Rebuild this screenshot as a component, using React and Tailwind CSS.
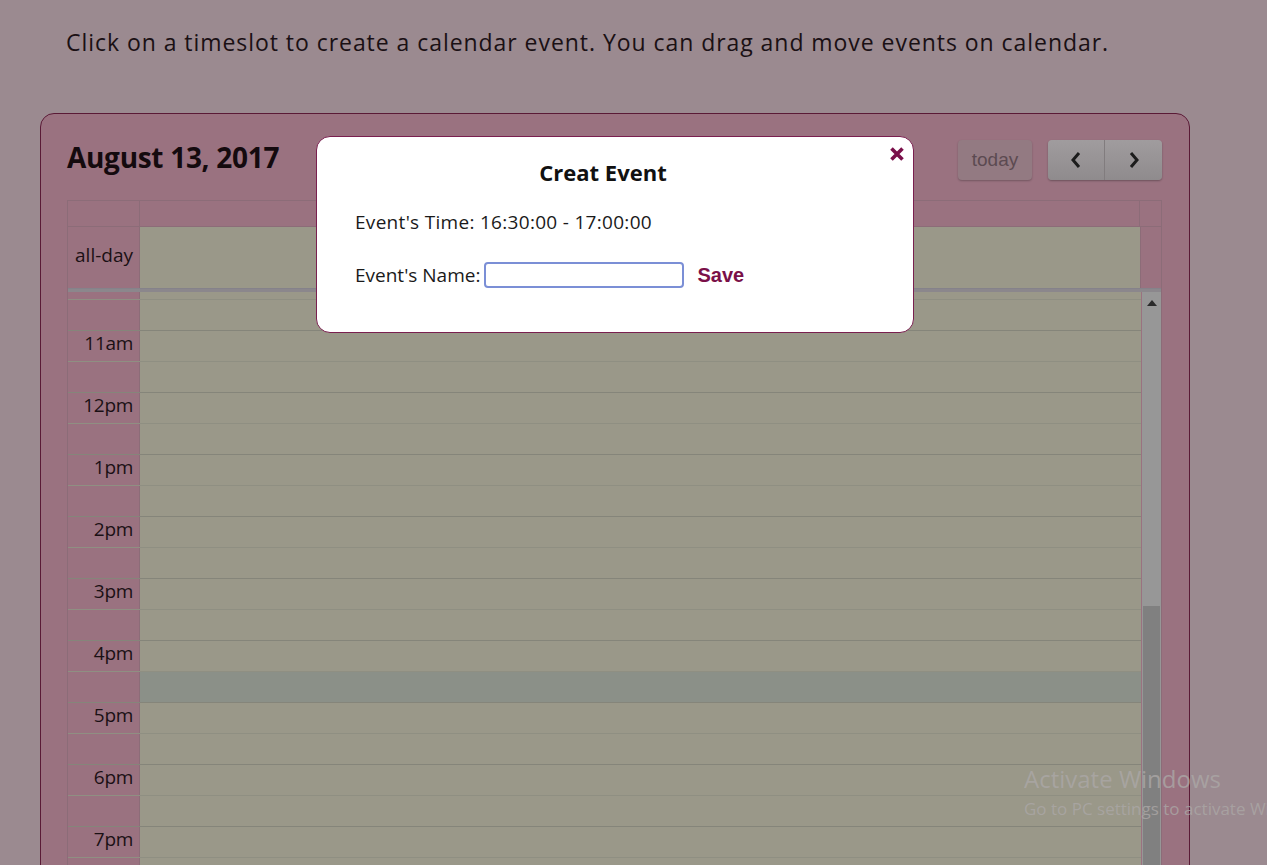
import React from 'react';

const font = { fontFamily: '"Open Sans", "Noto Sans", sans-serif' };

const slots = [
  '', '', '11am', '', '12pm', '', '1pm', '', '2pm', '', '3pm', '', '4pm', 'hl', '5pm', '', '6pm', '', '7pm', '',
];

function TimeRow({ label, index }) {
  const isHour = index % 2 === 0;
  const highlight = label === 'hl';
  return (
    <div className={`flex h-[31px] border-t ${isHour ? 'border-[#85857a]' : 'border-[#8f8f82]'}`}>
      <div className="w-[72px] shrink-0 bg-[#9a7280] border-r border-[#8c6c78] text-right pr-[6px] text-[19px] leading-[24px] text-[#1a1014] tracking-[-0.3px]">
        {label !== 'hl' ? label : ''}
      </div>
      <div className={`flex-1 ${highlight ? 'bg-[#8b9088]' : 'bg-[#9a9889]'}`} />
    </div>
  );
}

export default function App() {
  return (
    <div className="relative h-[865px] w-full overflow-hidden bg-[#9b8a90]" style={font}>
      {/* Instruction */}
      <p className="pl-[66px] pt-[26px] text-[23px] leading-[32px] text-[#1a1014] tracking-[0.95px]">
        Click on a timeslot to create a calendar event. You can drag and move events on calendar.
      </p>

      {/* Calendar card */}
      <div className="ml-[40px] mt-[55px] w-[1150px] h-[800px] rounded-[14px] border border-[#5a1a36] bg-[#9a7280] pl-[26px] pr-[27px] pt-[25px]">
        <div className="flex items-center justify-between h-[42px]">
          <h2 className="text-[28px] font-bold text-[#140a0e] tracking-[-0.3px] mt-[-6px]">August 13, 2017</h2>
          <div className="flex items-center gap-[16px]">
            <button className="h-[40px] w-[74px] rounded-[4px] bg-[#937a82] text-[#5c4a51] text-[19px] shadow-[0_1px_2px_rgba(0,0,0,0.25)]" style={{ fontFamily: '"Liberation Sans", Arial, sans-serif' }}>
              today
            </button>
            <div className="flex h-[40px] rounded-[4px] overflow-hidden shadow-[0_1px_2px_rgba(0,0,0,0.3)]">
              <button className="w-[57px] bg-gradient-to-b from-[#a09c9e] to-[#8f8b8d] border-r border-[#817c7e] flex items-center justify-center">
                <svg width="14" height="18" viewBox="0 0 14 18"><path d="M10 2 L4 9 L10 16" fill="none" stroke="#1c1c1c" strokeWidth="3" /></svg>
              </button>
              <button className="w-[57px] bg-gradient-to-b from-[#a09c9e] to-[#8f8b8d] flex items-center justify-center">
                <svg width="14" height="18" viewBox="0 0 14 18"><path d="M4 2 L10 9 L4 16" fill="none" stroke="#1c1c1c" strokeWidth="3" /></svg>
              </button>
            </div>
          </div>
        </div>

        {/* Grid */}
        <div className="mt-[19px] border border-[#8c6c78]">
          <div className="flex h-[26px] border-b border-[#8c6c78]">
            <div className="w-[72px] border-r border-[#8c6c78]" />
            <div className="flex-1 border-r border-[#8c6c78]" />
            <div className="w-[21px]" />
          </div>
          <div className="flex h-[61px]">
            <div className="w-[72px] border-r border-[#8c6c78] text-right pr-[6px] pt-[16px] text-[19px] leading-[24px] text-[#1a1014]">
              all-day
            </div>
            <div className="flex-1 bg-[#9a9889]" />
            <div className="w-[21px] border-l border-[#8c6c78]" />
          </div>
          <div className="h-[4px] bg-[#8b878c] border-t border-[#85828a]" />
          <div className="flex h-[580px] overflow-hidden">
            <div className="flex-1 overflow-hidden">
              <div className="mt-[-24px]">
                {slots.map((label, i) => (
                  <TimeRow key={i} label={label} index={i} />
                ))}
              </div>
            </div>
            <div className="w-[19px] ml-[1px] bg-[#979797] flex flex-col">
              <div className="h-[22px] flex items-center justify-center">
                <svg width="10" height="6" viewBox="0 0 10 6"><path d="M0 6 L5 0 L10 6 Z" fill="#2a2a2a" /></svg>
              </div>
              <div className="mt-[292px] mx-[1px] flex-1 bg-[#808080]" />
            </div>
          </div>
        </div>
      </div>

      {/* Modal */}
      <div className="absolute left-[316px] top-[136px] w-[598px] h-[197px] rounded-[14px] border border-[#7a1f4f] bg-white px-[38px] pt-[19px]">
        <button className="absolute right-[8px] top-[9px]" aria-label="close">
          <svg width="16" height="16" viewBox="0 0 16 16">
            <path d="M2.5 2.5 L13.5 13.5 M13.5 2.5 L2.5 13.5" stroke="#7a0f4a" strokeWidth="3.6" strokeLinecap="butt" />
          </svg>
        </button>
        <h3 className="text-center text-[22px] font-bold text-[#111] pr-[24px] leading-[32px]">Creat Event</h3>
        <p className="mt-[21px] text-[19px] leading-[26px] text-[#1a1a1a] tracking-[0.3px]">Event's Time: 16:30:00 - 17:00:00</p>
        <div className="mt-[27px] flex items-center text-[19px] leading-[26px] text-[#1a1a1a]">
          <span>Event's Name:</span>
          <input className="ml-[4px] h-[26px] w-[200px] rounded-[4px] border-2 border-[#7b8fd6] outline-none" />
          <button className="ml-[13px] font-bold text-[#7a1048] text-[20px]" style={{ fontFamily: '"Liberation Sans", Arial, sans-serif' }}>Save</button>
        </div>
      </div>

      {/* Watermark */}
      <div className="absolute left-[1024px] top-[764px] whitespace-nowrap text-[#aba7a6] opacity-80 pointer-events-none">
        <div className="text-[24px] leading-[30px]">Activate Windows</div>
        <div className="text-[17px] leading-[22px] mt-[4px]">Go to PC settings to activate Windows.</div>
      </div>
    </div>
  );
}
